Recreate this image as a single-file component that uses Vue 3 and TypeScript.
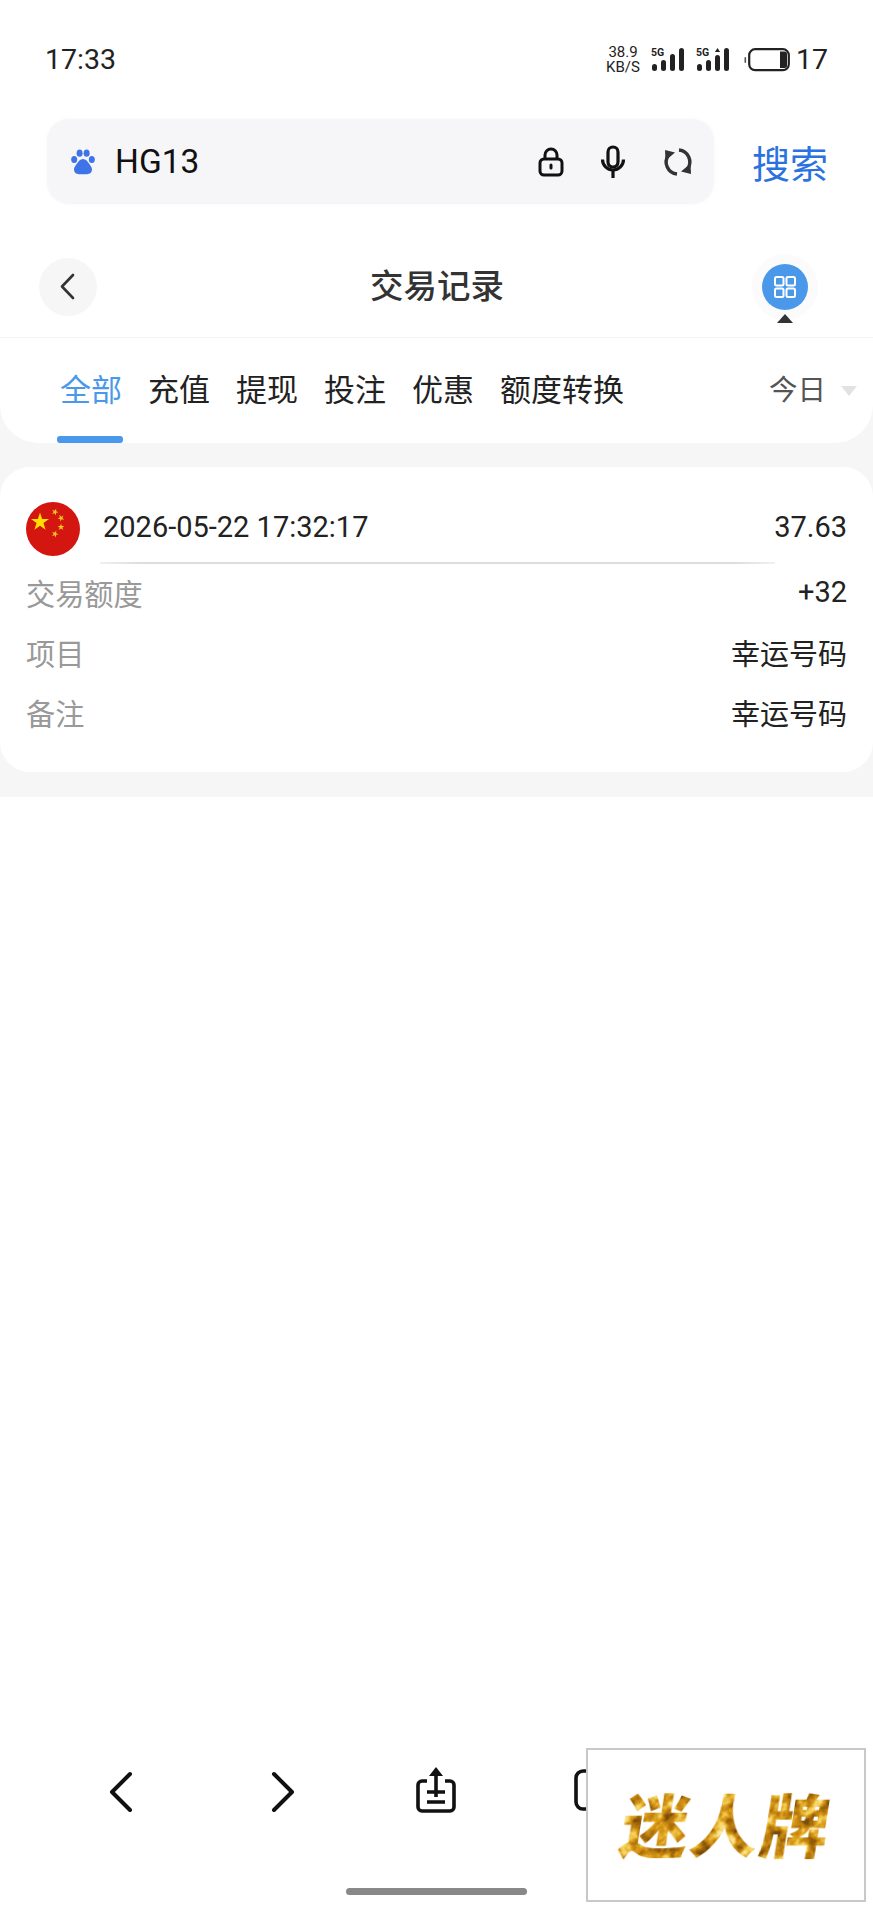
<script setup lang="ts">
const tabs = ['全部', '充值', '提现', '投注', '优惠', '额度转换'];
const rows = [
  { label: '交易额度', value: '+32' },
  { label: '项目', value: '幸运号码' },
  { label: '备注', value: '幸运号码' },
];

// five-pointed star polygon, first point facing up (or rotated by `rot` degrees)
function star(cx: number, cy: number, r: number, rot = 0): string {
  const pts: string[] = [];
  for (let i = 0; i < 10; i++) {
    const rad = i % 2 === 0 ? r : r * 0.382;
    const a = ((i * 36 - 90 + rot) * Math.PI) / 180;
    pts.push(`${(cx + rad * Math.cos(a)).toFixed(2)},${(cy + rad * Math.sin(a)).toFixed(2)}`);
  }
  return pts.join(' ');
}

const smallStars = [
  star(29, 10, 3.6, 20),
  star(35, 16, 3.6, 45),
  star(35, 25, 3.6, 0),
  star(29, 32, 3.6, 20),
];
</script>

<template>
  <div class="page">
    <!-- Status bar -->
    <div class="status">
      <span class="status__time">17:33</span>
      <div class="status__right">
        <div class="speed"><span>38.9</span><span>KB/S</span></div>
        <svg class="signal" width="34" height="26" viewBox="0 0 34 26">
          <text x="0" y="9" class="signal__g">5G</text>
          <rect x="1" y="17" width="5" height="7" rx="2.5" />
          <rect x="10" y="13" width="5" height="11" rx="2.5" />
          <rect x="19" y="7" width="5" height="17" rx="2.5" />
          <rect x="28" y="1" width="5" height="23" rx="2.5" />
        </svg>
        <svg class="signal" width="34" height="26" viewBox="0 0 34 26">
          <text x="0" y="9" class="signal__g">5G</text>
          <rect x="1" y="17" width="5" height="7" rx="2.5" />
          <rect x="10" y="13" width="5" height="11" rx="2.5" />
          <rect x="19" y="8" width="5" height="16" rx="2.5" />
          <path d="M21.5 1l2.600 4h-5.200z" />
          <rect x="28" y="1" width="5" height="23" rx="2.5" />
        </svg>
        <svg class="battery" width="46" height="24" viewBox="0 0 46 24">
          <rect x="5.2" y="1.2" width="39.6" height="21" rx="6" fill="none" stroke="#222" stroke-width="2.2" />
          <path d="M36 3.500h4.500a2.500 2.500 0 0 1 2.500 2.500v11.500a2.500 2.500 0 0 1-2.500 2.500H36z" fill="#222" />
          <rect x="0.5" y="9" width="1.6" height="6" rx="0.8" fill="#555" />
        </svg>
        <span class="status__batt">17</span>
      </div>
    </div>

    <!-- Browser search bar -->
    <div class="search">
      <div class="search__box">
        <svg class="search__paw" width="24" height="26" viewBox="0 0 24 26" fill="#3f74e8">
          <ellipse cx="3.2" cy="10.5" rx="3" ry="3.6" />
          <ellipse cx="8.6" cy="4.2" rx="3" ry="3.6" />
          <ellipse cx="15.6" cy="4.2" rx="3" ry="3.6" />
          <ellipse cx="20.8" cy="10.5" rx="3" ry="3.6" />
          <path d="M12 10c3 0 4.600 2.400 6 4.600 1.400 2.100 3 3.600 3 6 0 2.900-2.200 4.600-5 4.600H8c-2.800 0-5-1.700-5-4.600 0-2.400 1.600-3.900 3-6C7.400 12.400 9 10 12 10z" />
        </svg>
        <span class="search__text">HG13</span>
        <div class="search__icons">
          <svg width="26" height="30" viewBox="0 0 26 30" fill="none" stroke="#111" stroke-width="3">
            <rect x="2" y="12" width="22" height="16" rx="4" />
            <path d="M7 12V8a6 6 0 0 1 12 0v4" />
            <path d="M13 18v3" stroke-linecap="round" />
          </svg>
          <svg width="26" height="34" viewBox="0 0 26 34" fill="none" stroke="#111" stroke-width="3.200">
            <rect x="8" y="2" width="10" height="20" rx="5" />
            <path d="M2.500 14.500a10.500 10.500 0 0 0 21 0" />
            <path d="M13 25v8" />
          </svg>
          <svg width="32" height="30" viewBox="0 0 32 30" fill="none" stroke="#333" stroke-width="3.400">
            <path d="M17 3a12 12 0 0 1 8.500 19" />
            <path d="M15 27a12 12 0 0 1-8.500-19" />
            <path d="M3.500 13.500 3 3l10 2.500z" fill="#333" stroke="none" />
            <path d="M28.500 16.500 29 27l-10-2.500z" fill="#333" stroke="none" />
          </svg>
        </div>
      </div>
      <span class="search__btn">搜索</span>
    </div>

    <!-- Page header -->
    <header class="head">
      <div class="head__back">
        <svg width="16" height="27" viewBox="0 0 16 27" fill="none" stroke="#333" stroke-width="2.600" stroke-linecap="round" stroke-linejoin="round">
          <path d="M14 2 3 13.500 14 25" />
        </svg>
      </div>
      <h1 class="head__title">交易记录</h1>
      <div class="head__menu">
        <div class="head__circle">
          <svg width="24" height="24" viewBox="0 0 24 24" fill="none" stroke="#fff" stroke-width="2">
            <rect x="2" y="2" width="8.500" height="8.500" rx="1.500" />
            <rect x="13.500" y="2" width="8.500" height="8.500" rx="1.500" />
            <rect x="2" y="13.500" width="8.500" height="8.500" rx="1.500" />
            <rect x="13.500" y="13.500" width="8.500" height="8.500" rx="1.500" />
          </svg>
        </div>
        <span class="head__caret"></span>
      </div>
    </header>

    <!-- Filter tabs -->
    <nav class="tabs">
      <span
        v-for="(tab, i) in tabs"
        :key="tab"
        class="tabs__item"
        :class="{ 'tabs__item--active': i === 0 }"
      >{{ tab }}</span>
      <div class="tabs__range">
        <span>今日</span>
        <i class="tabs__arrow"></i>
      </div>
    </nav>

    <!-- Records -->
    <section class="list">
      <article class="card">
        <div class="card__top">
          <svg class="card__flag" width="54" height="54" viewBox="0 0 54 54">
            <circle cx="27" cy="27" r="27" fill="#d3160f" />
            <polygon :points="star(14, 20, 9.500)" fill="#ffde00" />
            <polygon v-for="p in smallStars" :key="p" :points="p" fill="#f7c81e" />
          </svg>
          <span class="card__date">2026-05-22 17:32:17</span>
          <span class="card__amount">37.63</span>
        </div>
        <div class="card__rows">
          <div v-for="(row, i) in rows" :key="i" class="card__row">
            <span class="card__label">{{ row.label }}</span>
            <span class="card__value">{{ row.value }}</span>
          </div>
        </div>
      </article>
    </section>

    <!-- Browser toolbar -->
    <footer class="toolbar">
      <svg class="toolbar__chev" width="24" height="42" viewBox="0 0 24 42" fill="none" stroke="#111" stroke-width="4" stroke-linecap="round" stroke-linejoin="round">
        <path d="M21 3 3 21l18 18" />
      </svg>
      <svg class="toolbar__chev" width="24" height="42" viewBox="0 0 24 42" fill="none" stroke="#111" stroke-width="4" stroke-linecap="round" stroke-linejoin="round">
        <path d="m3 3 18 18L3 39" />
      </svg>
      <svg width="42" height="46" viewBox="0 0 42 46" fill="none" stroke="#111" stroke-width="3.600">
        <path d="M12 14H7a4 4 0 0 0-4 4v22a4 4 0 0 0 4 4h28a4 4 0 0 0 4-4V18a4 4 0 0 0-4-4h-5" />
        <path d="M21 30V6" />
        <path d="M21 0l7 9H14z" fill="#111" stroke="none" />
        <path d="M12 25h18M12 35h18" />
      </svg>
      <svg width="42" height="42" viewBox="0 0 42 42" fill="none" stroke="#111" stroke-width="3.600">
        <rect x="2" y="2" width="38" height="38" rx="7" />
      </svg>
    </footer>
    <div class="home-bar"></div>

    <!-- Floating watermark -->
    <div class="badge">
      <svg class="badge__defs" width="0" height="0" aria-hidden="true">
        <filter id="gold" x="-5%" y="-5%" width="110%" height="110%" color-interpolation-filters="sRGB">
          <feTurbulence type="fractalNoise" baseFrequency="0.075" numOctaves="3" seed="7" />
          <feColorMatrix type="matrix" values="0 0 0 0 0  0 0 0 0 0  0 0 0 0 0  1.800 0 0 0 -0.450" result="n" />
          <feColorMatrix in="n" type="matrix" values="0 0 0 1 0  0 0 0 1 0  0 0 0 1 0  0 0 0 0 1" result="g" />
          <feComponentTransfer in="g" result="metal">
            <feFuncR type="table" tableValues="0.48 0.70 0.85 0.95 0.99" />
            <feFuncG type="table" tableValues="0.30 0.46 0.60 0.80 0.92" />
            <feFuncB type="table" tableValues="0.03 0.05 0.09 0.32 0.66" />
          </feComponentTransfer>
          <feComposite in="metal" in2="SourceAlpha" operator="in" />
        </filter>
      </svg>
      <span class="badge__text">迷人牌</span>
    </div>
  </div>
</template>

<style scoped>
.page {
  position: relative;
  min-height: 1920px;
  display: flex;
  flex-direction: column;
  background: #fff;
  font-family: Roboto, "Noto Sans CJK SC", sans-serif;
  overflow: hidden;
}

.status {
  height: 119px;
  padding: 0 45px;
  display: flex;
  align-items: center;
  justify-content: space-between;
  color: #222;
  box-sizing: border-box;
}
.status__time { font-size: 28.500px; }
.status__right { display: flex; align-items: center; }
.speed {
  display: flex;
  flex-direction: column;
  align-items: center;
  font-size: 15px;
  line-height: 15px;
  margin-right: 11px;
}
.signal { margin-right: 11px; fill: #222; }
.signal__g { font: 700 10.5px Roboto, sans-serif; }
.battery { margin: 0 6px 0 3px; }
.status__batt { font-size: 28.500px; }

.search {
  display: flex;
  align-items: center;
  padding: 0 45px 0 47px;
}
.search__box {
  width: 667px;
  height: 85px;
  display: flex;
  align-items: center;
  padding: 0 20px 0 24px;
  box-sizing: border-box;
  background: #f6f6f8;
  border-radius: 22px;
  box-shadow: 0 0 4px rgba(246, 246, 248, 0.8);
}
.search__text {
  margin-left: 20px;
  font-size: 33.500px;
  color: #111;
}
.search__icons {
  margin-left: auto;
  display: flex;
  align-items: center;
  gap: 36px;
}
.search__btn {
  margin-left: auto;
  font-size: 38px;
  color: #2a72e0;
}

.head {
  margin-top: 33px;
  height: 100px;
  padding: 0 55px 0 39px;
  display: grid;
  grid-template-columns: 1fr auto 1fr;
  align-items: center;
  border-bottom: 1px solid #f5f5f5;
}
.head__back {
  width: 58px;
  height: 58px;
  display: flex;
  align-items: center;
  justify-content: center;
  background: #f6f6f6;
  border-radius: 50%;
  padding-right: 2px;
  box-sizing: border-box;
  margin-top: -1px;
}
.head__title {
  margin: -8px 0 0 17px;
  font-size: 33.500px;
  font-weight: 500;
  color: #333;
}
.head__menu {
  position: relative;
  justify-self: end;
  width: 66px;
  height: 66px;
  display: flex;
  align-items: center;
  justify-content: center;
  background: #fbfbfb;
  border-radius: 50%;
}
.head__circle {
  width: 46px;
  height: 46px;
  display: flex;
  align-items: center;
  justify-content: center;
  background: #4a98ea;
  border-radius: 50%;
}
.head__caret {
  position: absolute;
  left: 25px;
  bottom: -3px;
  border-left: 8px solid transparent;
  border-right: 8px solid transparent;
  border-bottom: 9px solid #333;
}

.tabs {
  height: 105px;
  padding: 0 16px 0 60px;
  display: flex;
  align-items: flex-start;
  gap: 26px;
  background: #fff;
  border-radius: 0 0 38px 38px;
  position: relative;
  z-index: 1;
  box-sizing: border-box;
}
.tabs__item {
  position: relative;
  margin-top: 32px;
  font-size: 31px;
  line-height: 42px;
  color: #222;
}
.tabs__item--active { color: #4a98ea; }
.tabs__item--active::after {
  content: "";
  position: absolute;
  left: -3px;
  right: -1px;
  top: 66px;
  height: 7px;
  background: #4a98ea;
  border-radius: 3px;
}
.tabs__range {
  margin-left: auto;
  margin-top: 32px;
  display: flex;
  align-items: center;
  gap: 15px;
  font-size: 28.500px;
  line-height: 42px;
  color: #555;
}
.tabs__arrow {
  border-left: 8px solid transparent;
  border-right: 8px solid transparent;
  border-top: 10px solid #e2e2e2;
}

.list {
  padding: 25px 0;
  margin-top: -1px;
  background: #f6f6f6;
  box-shadow: 0 -40px 0 #f6f6f6;
}
.card {
  height: 305px;
  padding: 0 26px;
  box-sizing: border-box;
  background: #fff;
  border-radius: 30px;
}
.card__top {
  position: relative;
  height: 97px;
  display: flex;
  align-items: center;
  padding-top: 24px;
  box-sizing: border-box;
}
.card__top::after {
  content: "";
  position: absolute;
  left: 74px;
  right: 72px;
  bottom: 0;
  height: 2px;
  background: linear-gradient(90deg, #f0f0f0, #ddd 6%, #ddd 94%, #f0f0f0);
}
.card__flag { flex: none; margin-top: 2px; }
.card__date {
  margin: -2px 0 0 23px;
  font-size: 29px;
  color: #222;
}
.card__amount {
  margin: -2px 0 0 auto;
  font-size: 29px;
  color: #222;
}
.card__rows { display: flex; flex-direction: column; margin-top: -2px; }
.card__row {
  height: 60px;
  display: flex;
  align-items: center;
  justify-content: space-between;
}
.card__label {
  font-size: 29.200px;
  color: #999;
}
.card__value {
  font-size: 29px;
  color: #222;
}

.toolbar {
  margin-top: auto;
  padding-left: 40px;
  height: 44px;
  display: grid;
  grid-template-columns: 162px 162px 144px 174px;
  align-items: center;
  justify-items: center;
}
.toolbar__chev { margin-top: 3px; }
.home-bar {
  align-self: center;
  width: 181px;
  height: 7px;
  margin: 77px 0 25px;
  background: #888;
  border-radius: 4px;
}

.badge {
  position: absolute;
  right: 7px;
  bottom: 18px;
  width: 280px;
  height: 154px;
  display: flex;
  align-items: center;
  justify-content: center;
  box-sizing: border-box;
  background: #fff;
  border: 2px solid #c8c8c8;
}
.badge__defs { position: absolute; }
.badge__text {
  font-family: "Noto Sans CJK SC", sans-serif;
  font-size: 68px;
  font-weight: 900;
  line-height: 1;
  letter-spacing: 2px;
  color: #b8860b;
  transform: skewX(-9deg);
  filter: url(#gold);
  margin: -4px 0 0 2px;
}
</style>

<style>
body {
  background: #fff;
}
</style>
